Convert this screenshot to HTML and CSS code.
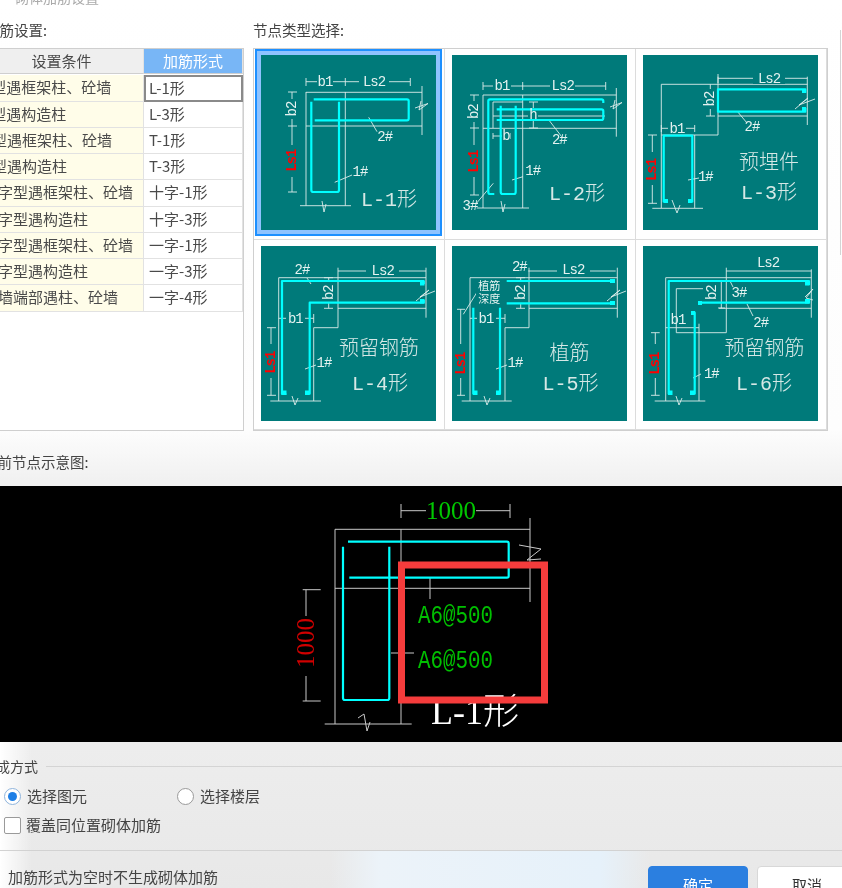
FILE: index.html
```html
<!DOCTYPE html>
<html lang="zh-CN">
<head>
<meta charset="utf-8">
<title>砌体加筋设置</title>
<link rel="stylesheet" href="styles.css">
</head>
<body>
<div class="page">
  <div class="title">砌体加筋设置</div>
  <div class="top">
    <section class="settings">
      <div class="label">加筋设置:</div>
      <div class="table">
        <div class="th">设置条件</div><div class="th th-on">加筋形式</div>
        <div class="td">L型遇框架柱、砼墙</div><div class="tv tv-on">L-1形</div>
        <div class="td">L型遇构造柱</div><div class="tv">L-3形</div>
        <div class="td">T型遇框架柱、砼墙</div><div class="tv">T-1形</div>
        <div class="td">T型遇构造柱</div><div class="tv">T-3形</div>
        <div class="td">十字型遇框架柱、砼墙</div><div class="tv">十字-1形</div>
        <div class="td">十字型遇构造柱</div><div class="tv">十字-3形</div>
        <div class="td">一字型遇框架柱、砼墙</div><div class="tv">一字-1形</div>
        <div class="td">一字型遇构造柱</div><div class="tv">一字-3形</div>
        <div class="td td-in">墙端部遇柱、砼墙</div><div class="tv">一字-4形</div>
      </div>
    </section>
    <section class="nodes">
      <div class="label label-r">节点类型选择:</div>
      <div class="grid">
        <div class="cell">
          <svg class="card card-on" viewBox="0 0 175 175">
            <path class="ln" d="M45 26.7H149M45 23V31M84.3 23V31M149.3 23V31M45 37.3H161M45 71H161M45 37V150.7M84.3 37V150.7M161 31V80M39 150.7H90M31 37V137M27 37H36M27 71H36M27 137H36"/>
            <path class="bg" d="M56 21H72V32H56ZM98 21H128V32H98ZM26 44H36V64H26ZM26 90H36V122H26Z"/>
            <path class="ln" d="M61 146L63 157L65 149M154 53L167 48.5L158 55L160 46M107.7 62.3L116 76.7M73.7 127.3L91 120"/>
            <path class="rb" d="M50.3 46.7V135Q50.3 137 52.3 137H76Q78 137 78 135V46.7"/>
            <path class="rb" d="M52.7 44.3H146Q147.7 44.3 147.7 46V63.5Q147.7 65.3 146 65.3H53.7"/>
            <text class="t" x="64" y="27">b1</text><text class="t" x="113" y="27">Ls2</text>
            <text class="t" x="31" y="54" transform="rotate(-90 31 54)">b2</text>
            <text class="r" x="31" y="105.7" transform="rotate(-90 31 105.7)">Ls1</text>
            <text class="t" x="123.7" y="82">2#</text><text class="t" x="99" y="117">1#</text>
            <text class="big" x="128" y="145">L-1形</text>
          </svg>
        </div>
        <div class="cell">
          <svg class="card" viewBox="0 0 175 175">
            <path class="ln" d="M31 31H153.7M31 27V35M70.7 27V35M153.7 27V35M31 40H164.3M31 73.3H164.3M31 40V153M70.7 40V153M164.3 33V81.7M24.7 153H77M22 40V140M18 40H27M18 73H27M18 140H27M41 47H70.7M41 47V73M41 61H153M41 81H58M41 78V84M58 78V84M81.3 47V73M77 47H86M77 73H86"/>
            <path class="bg" d="M41 25H59V36H41ZM98 25H123V36H98ZM17 46H27V67H17ZM17 90H27V122H17ZM50 76H58V86H50ZM76 53H86V66H76Z"/>
            <path class="ln" d="M49 146L51 157L53 149M158 52L170 47.5L161 54L163 45M96.3 64.3L109.7 81.7M60 125L71 121.7M41.3 128.3L24.7 148"/>
            <path class="rb" d="M42.3 139H38Q36.3 139 36.3 137V46Q36.3 44.3 38 44.3H149.5Q151.3 44.3 151.3 46V48"/>
            <path class="rb" d="M44.7 54.3H149.5Q151.3 54.3 151.3 56V63Q151.3 65 149.5 65H44.7"/>
            <path class="rb" d="M48.7 50.7V137Q48.7 139 50.7 139H62Q63.7 139 63.7 137V50.7"/>
            <text class="t" x="50" y="31">b1</text><text class="t" x="110.7" y="31">Ls2</text>
            <text class="t" x="22" y="56.7" transform="rotate(-90 22 56.7)">b2</text>
            <text class="r" x="22" y="106.7" transform="rotate(-90 22 106.7)">Ls1</text>
            <text class="t" x="54" y="81">b</text>
            <text class="t" x="81" y="60">h</text>
            <text class="t" x="107.3" y="85">2#</text><text class="t" x="80.7" y="115.7">1#</text><text class="t" x="18" y="150.7">3#</text>
            <text class="big" x="125" y="139">L-2形</text>
          </svg>
        </div>
        <div class="cell">
          <svg class="card" viewBox="0 0 175 175">
            <path class="ln" d="M75 23.3H164.3M75 19V28M164.3 21.7V70M18.3 29.3H164.3M75 21.7V80M75 61H164.3M18.3 80H75M18.3 29.3V153M51.7 80V153M9.3 153.3H60M67.3 29.3V61M63 61H72M18.3 73.3H51.7M18.3 70V77M51.7 70V77M9.3 80V148.3M5 80H14M5 148.3H14"/>
            <path class="bg" d="M110 17H142V29H110ZM62 34H72V54H62ZM25 68H43V79H25ZM4 97H14V130H4Z"/>
            <path class="ln" d="M152 54L165 43L156 50L172 44M29 145L34 158L37 150M94 56L104 68M45 125L56 123"/>
            <path class="rb" d="M162.3 37.7V34.3H75V56.7H162.3V53"/>
            <path class="rb" d="M25 146.7H20.7V80.7H49.3V146.7H45"/>
            <path class="blob" d="M159 34h4v4h-4zM159 52h4v4h-4zM21 144h4v4h-4zM45 144h4v4h-4z"/>
            <text class="t" x="126" y="23.5">Ls2</text>
            <text class="t" x="67.3" y="44" transform="rotate(-90 67.3 44)">b2</text>
            <text class="t" x="34" y="73.5">b1</text>
            <text class="r" x="9.3" y="115" transform="rotate(-90 9.3 115)">Ls1</text>
            <text class="t" x="109" y="72.3">2#</text><text class="t" x="62.3" y="121.7">1#</text>
            <text class="big" x="126" y="108">预埋件</text><text class="big" x="126" y="138">L-3形</text>
          </svg>
        </div>
        <div class="cell">
          <svg class="card" viewBox="0 0 175 175">
            <path class="ln" d="M77 25H165M77 21.7V81.7M17.7 31.7H165M77 62.3H165M165 21.7V71.7M52.7 81.7H77M52.7 81.7V155M17.7 31.7V155M9.3 155H60M67.7 31.7V62.3M63 62.3H72M63 31.7H72M17.7 72.3H52.7M52.7 68V77M10 81.7V149.3M6 81.7H15M6 149.3H15"/>
            <path class="bg" d="M105 19H138V31H105ZM62 36H72V57H62ZM25 67H44V78H25ZM5 98H15V132H5Z"/>
            <path class="ln" d="M31 150L34 159L37 152M46 32L50 38M155 55L168 44L159 51L174 45M44 123L55 119"/>
            <path class="rb" d="M25.3 148H21V35H162.7V38"/>
            <path class="rb" d="M44.3 147.7H48.7V56.7H162.7V54"/>
            <path class="blob" d="M159 35h4.5v4.5h-4.5zM159 53h4.5v4.5h-4.5zM21 144.5h4.5v4.5h-4.5zM44 144.5h4.5v4.5h-4.5z"/>
            <text class="t" x="121.7" y="25">Ls2</text>
            <text class="t" x="67.7" y="46.7" transform="rotate(-90 67.7 46.7)">b2</text>
            <text class="t" x="34.3" y="72.5">b1</text>
            <text class="r" x="10" y="116.7" transform="rotate(-90 10 116.7)">Ls1</text>
            <text class="t" x="41" y="24">2#</text><text class="t" x="63" y="117">1#</text>
            <text class="big" x="118" y="103">预留钢筋</text><text class="big" x="119" y="138">L-4形</text>
          </svg>
        </div>
        <div class="cell">
          <svg class="card" viewBox="0 0 175 175">
            <path class="ln" d="M76.3 25H163.7M165.3 21.7V71.7M18 31.7H165.3M77 62.3H165.3M77 21.7V81.7M53 81.7H77M18 31.7V155M53 81.7V155M9.7 155H59.7M68.7 31.7V62.3M64 62.3H73M64 31.7H73M18 72.3H53M53 68V77M8.7 63.3V149.3M5 63.3H13M5 149.3H13M24.7 46.7L11.3 68.3"/>
            <path class="bg" d="M105 19H138V31H105ZM63 36H73V57H63ZM25 67H44V78H25ZM3 98H14V132H3ZM24 33H52V61H24Z"/>
            <path class="ln" d="M32 150L35 159L38 152M155 55L168 44L159 51L174 45M44 123L55 119"/>
            <path class="rb" d="M54.7 35H163M54.7 57.3H163"/>
            <path class="rb" d="M25 147.7H21.3V61.7M44.3 147.7H48V61.7"/>
            <path class="blob" d="M158 33h5v4h-5zM158 55h5v4h-5zM21 144.5h4.5v4.5h-4.5zM44 144.5h4.5v4.5h-4.5z"/>
            <text class="t" x="121.3" y="23.5">Ls2</text>
            <text class="t" x="68.7" y="46.7" transform="rotate(-90 68.7 46.7)">b2</text>
            <text class="t" x="34" y="72.5">b1</text>
            <text class="r" x="8.7" y="117.7" transform="rotate(-90 8.7 117.7)">Ls1</text>
            <text class="small" x="37.3" y="40.7">植筋</text><text class="small" x="37.3" y="54">深度</text>
            <text class="t" x="67.3" y="21">2#</text><text class="t" x="63" y="117">1#</text>
            <text class="big" x="117.5" y="108">植筋</text><text class="big" x="118.5" y="138">L-5形</text>
          </svg>
        </div>
        <div class="cell">
          <svg class="card" viewBox="0 0 175 175">
            <path class="ln" d="M83.3 25H168.3M83.3 21.7V86.7M168.3 23.3V71.7M22.7 31.7H168.3M76 62.3H168.3M33.3 86.7H83.3M22.7 31.7V155M56 77.7V155M22.7 81.7H56M11.7 155H62.3M78.3 35V62M75 62H82M60 42.7H33.3V86.7M12.3 86.7V149.3M8 86.7H16.7M8 149.3H16.7M87 35L90 41M104 58L110 70"/>
            <path class="bg" d="M6 98H18V132H6Z"/>
            <path class="ln" d="M33 150L36 159L39 152M162 51L170 43L163 52L170 54M50 132L58 128"/>
            <path class="rb" d="M29 147.7H25.7V35H166V39"/>
            <path class="rb" d="M56 56.7H166V53M48 147.7H51.7V66.7H49"/>
            <path class="blob" d="M162 35h4.5v4.5h-4.5zM162 53h4.5v4.5h-4.5zM25 144.5h4.5v4.5h-4.5zM47 144.5h4.5v4.5h-4.5zM48 65h4v4h-4zM55 55h4v4h-4z"/>
            <text class="t" x="125" y="17">Ls2</text>
            <text class="t" x="69" y="46.7" transform="rotate(-90 69 46.7)">b2</text>
            <text class="t" x="35" y="74.3">b1</text>
            <text class="r" x="12.3" y="117.7" transform="rotate(-90 12.3 117.7)">Ls1</text>
            <text class="t" x="96" y="46.7">3#</text><text class="t" x="117.7" y="76.7">2#</text><text class="t" x="68.3" y="128.3">1#</text>
            <text class="big" x="121.5" y="103">预留钢筋</text><text class="big" x="121" y="138">L-6形</text>
          </svg>
        </div>
      </div>
    </section>
    <div class="side"></div>
  </div>
  <div class="label label-p">当前节点示意图:</div>
  <div class="preview">
    <svg class="canvas" viewBox="0 0 842 256">
      <path class="cad" d="M401 24.7H426M476 24.7H510M401 18V32M510 18V32M335 43.3H530M335 102.3H530M335 43.3V238M401 43.3V238M530 32V116M324.7 238H411.7M430 92V113M391 167H414M306 103.7V130M306 190V215M302.7 103.7H320.7M302.7 215H320.7M358 232L364 228L367 245L370 236M519 59L541 63L527 74L541 73"/>
      <path class="cy" d="M348 55.7H507Q508.7 55.7 508.7 57.5V90Q508.7 91.7 507 91.7H349.3"/>
      <path class="cy" d="M343 60.7V212Q343 214 345 214H387.3Q389.3 214 389.3 212V60.7"/>
      <text class="num" x="451" y="33">1000</text>
      <text class="num num-r" x="314" y="157" transform="rotate(-90 314 157)">1000</text>
      <text class="lab" x="418" y="137" textLength="75" lengthAdjust="spacingAndGlyphs">A6@500</text>
      <text class="lab" x="418" y="182" textLength="75" lengthAdjust="spacingAndGlyphs">A6@500</text>
      <text class="l1" x="475" y="238">L-1形</text>
      <rect class="mark" x="401.5" y="79" width="143" height="135"/>
    </svg>
  </div>
  <div class="method">
    <div class="legend"><span>生成方式</span><i class="rule"></i></div>
    <div class="row">
      <label class="opt opt-a"><i class="radio radio-on"></i>选择图元</label>
      <label class="opt"><i class="radio"></i>选择楼层</label>
    </div>
    <label class="opt check"><i class="box"></i>覆盖同位置砌体加筋</label>
  </div>
  <div class="footer">
    <span class="hint">加筋形式为空时不生成砌体加筋</span>
    <span class="btn btn-ok">确定</span>
    <span class="btn">取消</span>
  </div>
</div>
</body>
</html>
```

FILE: styles.css
```css
* { box-sizing: border-box; }
html, body { margin: 0; height: 888px; overflow: hidden; background: #fff; }
.page {
  width: 862px; height: 888px; margin-left: -20px; overflow: hidden;
  display: flex; flex-direction: column;
  font-family: "Noto Sans CJK SC", sans-serif; font-size: 15px; color: #444;
  background: linear-gradient(#fff 0, #fdfdfd 430px, #f1f1f1 480px, #ededed 745px, #e8e8e8 100%);
  filter: blur(0.35px);
}
.title { height: 20px; margin-top: -13px; margin-bottom: 3px; padding-left: 35px; font-size: 14px; line-height: 20px; color: #aaa; flex: none; }
.top { display: flex; flex: none; height: 421px; }
.settings { width: 273px; padding-top: 10px; flex: none; }
.nodes { width: 575px; padding-top: 10px; flex: none; }
.label { height: 28px; padding-left: 5px; font-size: 14.5px; line-height: 20px; color: #444; flex: none; }
.label-r { padding-left: 0; }
.label-p { height: 34px; margin-top: 21px; padding-left: 3px; }
.table {
  width: 264px; height: 383px; background: #fff;
  border: solid #cfcfcf; border-width: 1px 1px 1px 0;
  display: grid; grid-template-columns: 164px 99px; grid-auto-rows: 26.25px; align-content: start;
}
.table > div { line-height: 24px; white-space: nowrap; border-bottom: 1px solid #e2e2e2; border-right: 1px solid #e2e2e2; color: #4a4a4a; }
.th { text-align: center; background: #efefef; height: 25px; }
.table > .th { line-height: 24px; border-bottom-color: #cfcfcf; }
.table > .th-on { background: #78b6f6; color: #fff; }
.td { background: #fffde9; padding-left: 3px; overflow: hidden; }
.table > .td-in { padding-left: 18px; }
.tv { background: #fff; padding-left: 5px; }
.table > .tv-on { border: 2px solid #8a8a8a; line-height: 21px; padding-left: 3px; }
.grid {
  width: 575px; height: 383px; background: #fff; border: 1px solid #cfcfcf;
  display: grid; grid-template-columns: repeat(3, 1fr); grid-template-rows: repeat(2, 1fr);
}
.cell { display: flex; align-items: center; justify-content: center; padding: 0 2px 2px 0; border-right: 1px solid #dcdcdc; border-bottom: 1px solid #dcdcdc; }
.card { width: 175px; height: 175px; background: #007a7a; display: block; flex: none; font-family: "Liberation Mono", "Noto Sans CJK SC", monospace; }
.card-on { box-shadow: 0 0 0 4px #8fc3ff, 0 0 0 6px #1e90ff; }
.side { width: 2px; height: 225px; margin: 20px 0 0 12px; border-left: 1px solid #d4d4d4; flex: none; }
.ln { fill: none; stroke: #dcecea; stroke-width: 0.9; }
.bg { fill: #007a7a; }
.rb { fill: none; stroke: #00ffff; stroke-width: 2.2; stroke-linejoin: round; }
.blob { fill: #00ffff; }
.t, .r, .big, .small { text-anchor: middle; dominant-baseline: central; }
.t { font-size: 14px; letter-spacing: -1px; fill: #e4f2f0; }
.r { font-size: 14px; letter-spacing: -1px; font-weight: 700; fill: #f00; }
.big { font-size: 20px; font-weight: 300; fill: #d6e8e6; }
.small { font-size: 11px; fill: #e4f2f0; }
.preview { height: 256px; padding-left: 20px; background: #000; flex: none; }
.canvas { display: block; width: 842px; height: 256px; font-family: "Liberation Serif", "Noto Sans CJK SC", serif; }
.cad { fill: none; stroke: #c8c8c8; stroke-width: 1; }
.cy { fill: none; stroke: #00ffff; stroke-width: 2.2; }
.num { font-size: 25px; fill: #00c800; text-anchor: middle; }
.num-r { fill: #d00000; }
.lab { font-family: "Liberation Mono", monospace; font-size: 26px; fill: #00c000; }
.l1 { font-size: 36px; font-weight: 300; fill: #fff; text-anchor: middle; }
.mark { fill: none; stroke: #f53c3c; stroke-width: 7; }
.method {
  height: 109px; padding: 14px 0 0 24px; flex: none;
  border-bottom: 1px solid #d2d2d2;
  background: linear-gradient(90deg, #fff 20px, rgba(255,255,255,0) 52px);
}
.legend { display: flex; align-items: center; gap: 8px; margin-left: -22px; height: 20px; font-size: 14px; }
.rule { flex: 1; height: 1px; background: #d4d4d4; }
.row { display: flex; margin-top: 7px; height: 26px; align-items: center; }
.opt { display: flex; align-items: center; gap: 6px; color: #444; line-height: 20px; }
.opt-a { width: 173px; }
.check { gap: 5px; margin-top: 6px; }
.radio { width: 17px; height: 17px; border-radius: 50%; border: 1px solid #9a9a9a; background: #fff; flex: none; position: relative; }
.radio-on { border-color: #8fb4dc; }
.radio-on::after { content: ""; position: absolute; left: 3px; top: 3px; width: 9px; height: 9px; border-radius: 50%; background: #1e7fe6; }
.box { width: 17px; height: 17px; border: 1px solid #9a9a9a; border-radius: 2px; background: #fff; flex: none; }
.footer {
  flex: 1; position: relative; display: flex; align-items: flex-start;
  padding: 15px 0 0 28px;
  background: linear-gradient(90deg, #fff 20px, rgba(255,255,255,0) 52px, rgba(255,255,255,0) 350px, #ecf3f9 400px, #e6f1fa 620px, rgba(230,241,250,0) 670px);
}
.hint { width: 640px; line-height: 22px; flex: none; }
.btn { width: 100px; height: 36px; margin-right: 9px; background: #fff; border: 1px solid #d8d8d8; border-radius: 4px; text-align: center; line-height: 36px; color: #333; flex: none; }
.btn-ok { background: #2b7fe0; border-color: #2b7fe0; color: #fff; }
```
